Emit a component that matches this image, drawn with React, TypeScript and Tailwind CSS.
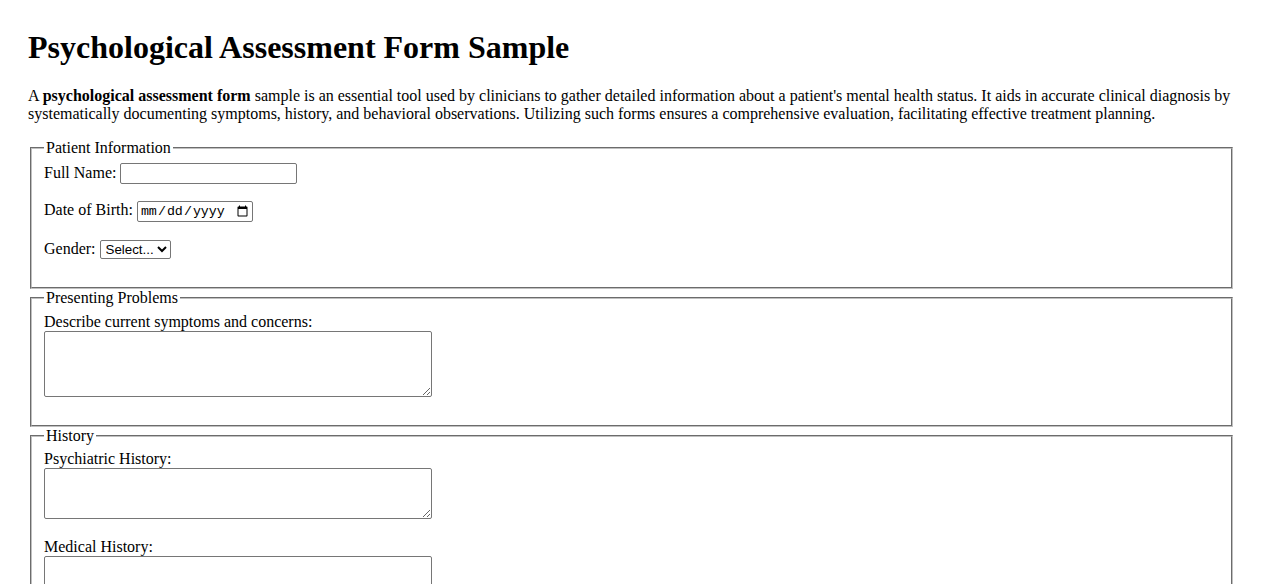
import React from "react";

const fieldsetCls =
  "mx-[2px] border-2 [border-style:groove] border-[rgb(192,192,192)] pt-[0.35em] px-[0.75em] pb-[0.625em] min-w-0";
const legendCls = "px-[2px]";
const textInputCls =
  "align-baseline border border-[#767676] rounded-[2px] bg-white py-[2px] px-[3px] w-[177px] text-[13.333px] font-['Liberation_Sans',Arial,sans-serif] leading-[normal]";
const dateInputCls =
  "align-baseline border border-[#767676] rounded-[2px] bg-white py-[1px] pl-[2px] pr-[1px] w-[116px] h-[21px] text-[13.333px] font-['Liberation_Mono',monospace] leading-[normal]";
const selectCls =
  "align-baseline border border-[#767676] rounded-[2px] bg-white pl-[1px] w-[71px] h-[19px] text-[13.333px] font-['Liberation_Sans',Arial,sans-serif] leading-[normal]";
const textareaCls =
  "align-baseline border border-[#767676] rounded-[2px] bg-white p-[2px] w-[388px] text-[13.333px] font-['Liberation_Mono',monospace] leading-[normal] resize";

export default function App() {
  return (
    <div className="bg-white text-black min-h-screen px-[28px] pt-[29px] pb-[28px] font-['Liberation_Serif','Times_New_Roman',serif] text-[16px] leading-[normal]">
      <h1 className="text-[32px] font-bold leading-[normal] mb-[21.44px]">
        Psychological Assessment Form Sample
      </h1>
      <p className="mb-[16px]">
        A <strong className="font-bold">psychological assessment form</strong> sample is an essential tool used by
        clinicians to gather detailed information about a patient's mental health status. It aids in accurate clinical
        diagnosis by systematically documenting symptoms, history, and behavioral observations. Utilizing such forms
        ensures a comprehensive evaluation, facilitating effective treatment planning.
      </p>
      <form>
        <fieldset className={fieldsetCls}>
          <legend className={legendCls}>Patient Information</legend>
          <div className="mb-[17px]">
            <label htmlFor="name">Full Name:</label> <input id="name" type="text" className={textInputCls} />
          </div>
          <div className="mb-[18px]">
            <label htmlFor="dob">Date of Birth:</label> <input id="dob" type="date" className={dateInputCls} />
          </div>
          <div className="mb-[18px]">
            <label htmlFor="gender">Gender:</label>{" "}
            <select id="gender" className={selectCls} defaultValue="">
              <option value="">Select...</option>
              <option value="male">Male</option>
              <option value="female">Female</option>
              <option value="other">Other</option>
            </select>
          </div>
        </fieldset>

        <fieldset className={fieldsetCls}>
          <legend className={legendCls}>Presenting Problems</legend>
          <div className="mb-[14px]">
            <label htmlFor="symptoms" className="block">
              Describe current symptoms and concerns:
            </label>
            <textarea id="symptoms" rows={4} className={`${textareaCls} h-[66px]`} />
          </div>
        </fieldset>

        <fieldset className={fieldsetCls}>
          <legend className={legendCls}>History</legend>
          <div className="mb-[15px]">
            <label htmlFor="psych" className="block">
              Psychiatric History:
            </label>
            <textarea id="psych" rows={3} className={`${textareaCls} h-[51px]`} />
          </div>
          <div className="mb-[15px]">
            <label htmlFor="medical" className="block">
              Medical History:
            </label>
            <textarea id="medical" rows={3} className={`${textareaCls} h-[51px]`} />
          </div>
        </fieldset>

        <fieldset className={fieldsetCls}>
          <legend className={legendCls}>Mental Status Examination</legend>
          <div className="mb-[15px]">
            <label htmlFor="appearance" className="block">
              Appearance and Behavior:
            </label>
            <textarea id="appearance" rows={3} className={`${textareaCls} h-[51px]`} />
          </div>
        </fieldset>
      </form>
    </div>
  );
}
